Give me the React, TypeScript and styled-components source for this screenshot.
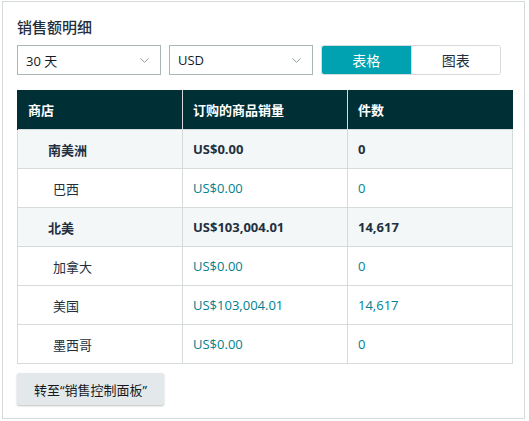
import React from "react";
import styled, { createGlobalStyle } from "styled-components";
import { ChevronDown } from "lucide-react";

const GlobalStyle = createGlobalStyle`
  html, body {
    margin: 0;
    padding: 0;
    background: #ffffff;
  }
  body {
    font-family: "Open Sans", "Noto Sans CJK SC", sans-serif;
    color: #16191f;
  }
`;

const Panel = styled.section`
  box-sizing: border-box;
  width: 523px;
  margin: 1px 0 0 2px;
  border: 1px solid #d5dbdb;
  padding: 15px 11px 13px 14px;
  background: #ffffff;
`;

const Title = styled.h2`
  margin: 0 0 8px;
  font-size: 15px;
  line-height: 20px;
  font-weight: 500;
  color: #232f3e;
`;

const Controls = styled.div`
  display: flex;
  gap: 8px;
  height: 30px;
  margin-bottom: 15px;
`;

const Select = styled.div`
  box-sizing: border-box;
  width: 144px;
  height: 30px;
  border: 1px solid #aab7b8;
  display: flex;
  align-items: center;
  justify-content: space-between;
  padding: 0 8px;
  font-size: 13px;
  color: #16191f;
  svg {
    color: #879596;
  }
`;

const Segmented = styled.div`
  display: flex;
  width: 180px;
  height: 30px;
  border-radius: 3px;
  overflow: hidden;
  border: 1px solid #d5dbdb;
  box-sizing: border-box;
`;

const SegButton = styled.button<{ $active?: boolean }>`
  flex: 1;
  border: none;
  margin: 0;
  font-family: inherit;
  font-size: 14px;
  background: ${({ $active }) => ($active ? "#00a1b0" : "#ffffff")};
  color: ${({ $active }) => ($active ? "#ffffff" : "#232f3e")};
  & + & {
    border-left: 1px solid #d5dbdb;
  }
`;

const Table = styled.table`
  width: 496px;
  border-collapse: collapse;
  table-layout: fixed;
  font-size: 13px;
  margin-bottom: 9px;
`;

const HeadCell = styled.th`
  height: 39px;
  padding: 0 10px;
  text-align: left;
  background: #002f36;
  color: #ffffff;
  font-weight: 700;
  border-left: 1px solid #d5dbdb;
  &:first-child {
    border-left: 1px solid #002f36;
  }
`;

const Row = styled.tr<{ $region?: boolean }>`
  background: ${({ $region }) => ($region ? "#f3f7f8" : "#ffffff")};
  font-weight: ${({ $region }) => ($region ? 700 : 400)};
`;

const Cell = styled.td<{ $indent?: number; $link?: boolean }>`
  height: 38px;
  padding: 0 10px 0 ${({ $indent }) => $indent ?? 10}px;
  border: 1px solid #d5dbdb;
  color: ${({ $link }) => ($link ? "#00818f" : "#232f3e")};
`;

const GoButton = styled.button`
  width: 147px;
  height: 32px;
  border: none;
  border-radius: 2px;
  background: #e3e9ea;
  box-shadow: 0 1px 2px rgba(0, 0, 0, 0.25);
  font-family: inherit;
  font-size: 13px;
  color: #16191f;
`;

type Line = { name: string; sales: string; units: string; region?: boolean };

const rows: Line[] = [
  { name: "南美洲", sales: "US$0.00", units: "0", region: true },
  { name: "巴西", sales: "US$0.00", units: "0" },
  { name: "北美", sales: "US$103,004.01", units: "14,617", region: true },
  { name: "加拿大", sales: "US$0.00", units: "0" },
  { name: "美国", sales: "US$103,004.01", units: "14,617" },
  { name: "墨西哥", sales: "US$0.00", units: "0" },
];

export default function App() {
  return (
    <>
      <GlobalStyle />
      <Panel>
        <Title>销售额明细</Title>
        <Controls>
          <Select>
            <span>30 天</span>
            <ChevronDown size={15} strokeWidth={1.5} />
          </Select>
          <Select>
            <span>USD</span>
            <ChevronDown size={15} strokeWidth={1.5} />
          </Select>
          <Segmented>
            <SegButton $active>表格</SegButton>
            <SegButton>图表</SegButton>
          </Segmented>
        </Controls>
        <Table>
          <thead>
            <tr>
              <HeadCell>商店</HeadCell>
              <HeadCell>订购的商品销量</HeadCell>
              <HeadCell>件数</HeadCell>
            </tr>
          </thead>
          <tbody>
            {rows.map((r) => (
              <Row key={r.name} $region={r.region}>
                <Cell $indent={r.region ? 30 : 35}>{r.name}</Cell>
                <Cell $link={!r.region}>{r.sales}</Cell>
                <Cell $link={!r.region}>{r.units}</Cell>
              </Row>
            ))}
          </tbody>
        </Table>
        <GoButton>转至“销售控制面板”</GoButton>
      </Panel>
    </>
  );
}
